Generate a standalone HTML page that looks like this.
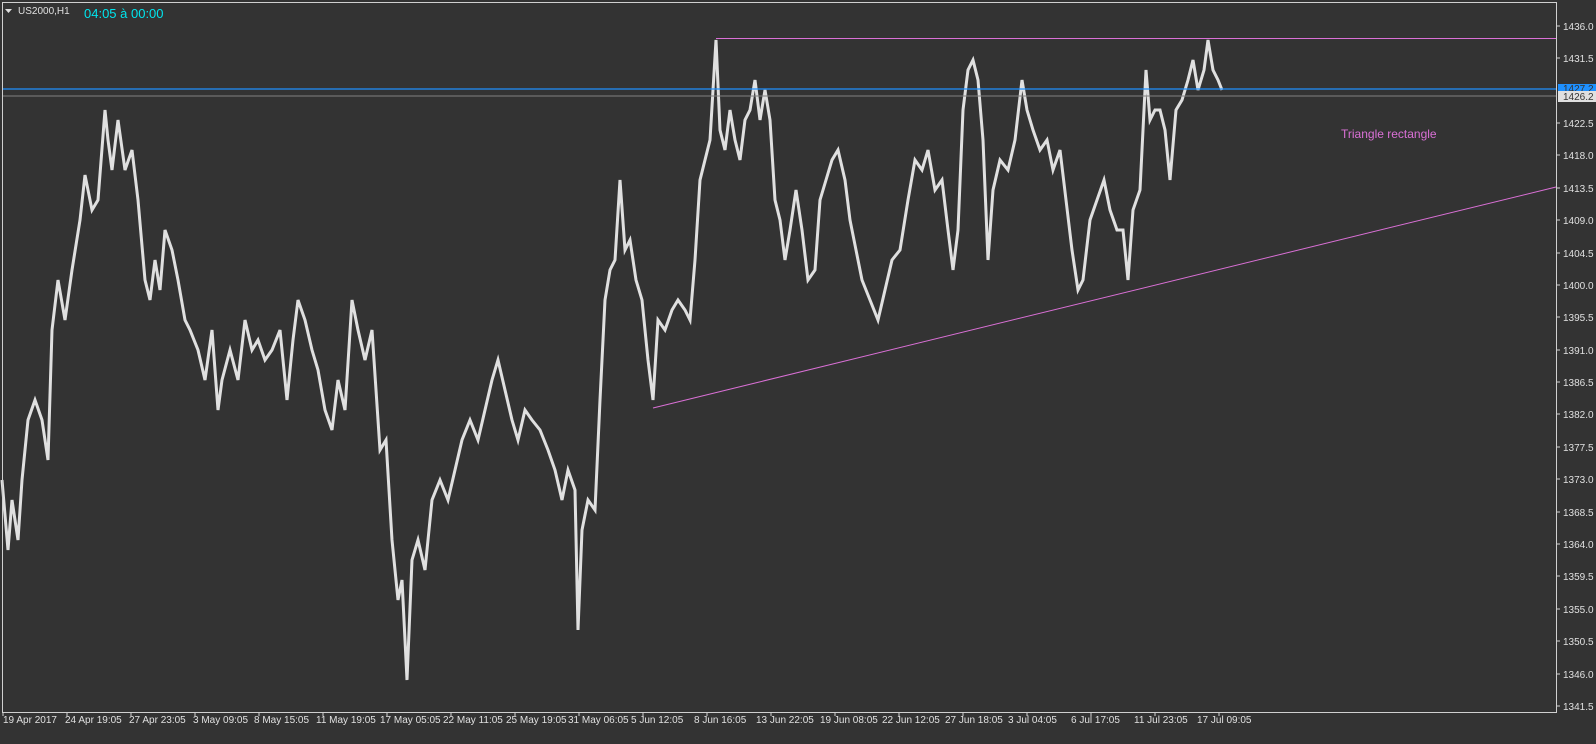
<!DOCTYPE html>
<html><head><meta charset="utf-8"><style>
html,body{margin:0;padding:0;background:#333;width:1596px;height:744px;overflow:hidden;font-family:"Liberation Sans",sans-serif}
svg{position:absolute;left:0;top:0}
</style></head><body>
<svg width="1596" height="744" xmlns="http://www.w3.org/2000/svg" font-family="Liberation Sans, sans-serif">
<rect width="1596" height="744" fill="#333"/>
<g stroke="#e0e0e0" fill="none" stroke-linejoin="miter">
<polyline stroke-width="3" points="2,480 8,550 12,500 18,540 22,480 28,420 35,400 42,420 48,460 52,330 58,280 65,320 72,270 80,220 85,175 92,210 98,200 105,110 108,140 112,170 118,120 125,170 132,150 138,200 145,280 150,300 155,260 160,290 165,230 172,250 178,280 185,320 190,330 198,350 205,380 212,330 218,410 222,380 230,350 238,380 245,320 252,350 258,340 265,360 272,350 280,330 287,400 293,340 298,300 305,320 312,350 318,370 325,410 332,430 338,380 345,410 352,300 358,330 365,360 372,330 380,450 386,440 392,540 398,600 402,580 407,680 412,560 418,540 425,570 432,500 440,480 448,500 455,470 462,440 470,420 478,440 485,410 492,380 498,360 505,390 512,420 518,440 525,410 532,420 540,430 548,450 555,470 562,500 568,470 575,490 578,630 582,530 588,500 595,510 600,400 605,300 610,270 615,260 620,180 625,250 630,240 636,280 642,300 648,360 653,400 658,320 665,330 672,310 678,300 685,310 690,320 695,260 700,180 705,160 710,140 716,40 720,130 725,150 730,110 735,140 740,160 745,120 750,110 755,80 760,120 765,90 770,120 775,200 780,220 785,260 790,230 796,190 802,230 808,280 815,270 820,200 826,180 832,160 838,150 845,180 850,220 856,250 862,280 870,300 878,320 885,290 892,260 900,250 908,200 915,160 922,170 928,150 935,190 942,180 948,230 953,270 958,230 963,110 968,70 973,60 978,80 983,140 988,260 993,190 1000,160 1008,170 1015,140 1022,80 1027,110 1033,130 1040,150 1047,140 1053,170 1060,150 1066,200 1072,250 1078,290 1083,280 1090,220 1097,200 1104,180 1110,210 1117,230 1123,230 1128,280 1133,210 1140,190 1146,70 1150,120 1155,110 1160,110 1165,130 1170,180 1176,110 1182,100 1188,80 1193,60 1198,90 1204,70 1208,40 1213,70 1218,80 1222,90"/>
</g>
<line x1="2" y1="89" x2="1556" y2="89" stroke="#1e90ff" stroke-width="1.3"/>
<line x1="2" y1="96" x2="1556" y2="96" stroke="#808080" stroke-width="1"/>
<line x1="716" y1="38.5" x2="1556" y2="38.5" stroke="#da70d6" stroke-width="1"/>
<line x1="653" y1="408" x2="1556" y2="187" stroke="#da70d6" stroke-width="1"/>
<text x="1341" y="138" fill="#da70d6" font-size="12">Triangle rectangle</text>
<rect x="2.5" y="2.5" width="1554" height="710" fill="none" stroke="#d0d0d0" stroke-width="1"/>
<polygon points="5,9 12,9 8.5,13" fill="#e0e0e0"/>
<text x="18" y="14" fill="#e0e0e0" font-size="10">US2000,H1</text>
<text x="84" y="18" fill="#00e5ee" font-size="13">04:05 à 00:00</text>
<g fill="#e0e0e0" font-size="10">
<g stroke="#d0d0d0">
<line x1="1556" x2="1560" y1="26" y2="26"/><line x1="1556" x2="1560" y1="58" y2="58"/><line x1="1556" x2="1560" y1="123" y2="123"/><line x1="1556" x2="1560" y1="155" y2="155"/><line x1="1556" x2="1560" y1="188" y2="188"/><line x1="1556" x2="1560" y1="220" y2="220"/><line x1="1556" x2="1560" y1="253" y2="253"/><line x1="1556" x2="1560" y1="285" y2="285"/><line x1="1556" x2="1560" y1="317" y2="317"/><line x1="1556" x2="1560" y1="350" y2="350"/><line x1="1556" x2="1560" y1="382" y2="382"/><line x1="1556" x2="1560" y1="414" y2="414"/><line x1="1556" x2="1560" y1="447" y2="447"/><line x1="1556" x2="1560" y1="479" y2="479"/><line x1="1556" x2="1560" y1="512" y2="512"/><line x1="1556" x2="1560" y1="544" y2="544"/><line x1="1556" x2="1560" y1="576" y2="576"/><line x1="1556" x2="1560" y1="609" y2="609"/><line x1="1556" x2="1560" y1="641" y2="641"/><line x1="1556" x2="1560" y1="674" y2="674"/><line x1="1556" x2="1560" y1="706" y2="706"/>
</g>
<text x="1563" y="30">1436.0</text><text x="1563" y="62">1431.5</text><text x="1563" y="127">1422.5</text><text x="1563" y="159">1418.0</text><text x="1563" y="192">1413.5</text><text x="1563" y="224">1409.0</text><text x="1563" y="257">1404.5</text><text x="1563" y="289">1400.0</text><text x="1563" y="321">1395.5</text><text x="1563" y="354">1391.0</text><text x="1563" y="386">1386.5</text><text x="1563" y="418">1382.0</text><text x="1563" y="451">1377.5</text><text x="1563" y="483">1373.0</text><text x="1563" y="516">1368.5</text><text x="1563" y="548">1364.0</text><text x="1563" y="580">1359.5</text><text x="1563" y="613">1355.0</text><text x="1563" y="645">1350.5</text><text x="1563" y="678">1346.0</text><text x="1563" y="710">1341.5</text>
</g>
<rect x="1558" y="84" width="38" height="8" fill="#1e90ff"/>
<text x="1563" y="92" fill="#333" font-size="10">1427.2</text>
<rect x="1558" y="91" width="38" height="11" fill="#e0e0e0"/>
<text x="1563" y="100" fill="#333" font-size="10">1426.2</text>
<g stroke="#d0d0d0">
<line x1="3" x2="3" y1="712" y2="716"/><line x1="67" x2="67" y1="712" y2="716"/><line x1="131" x2="131" y1="712" y2="716"/><line x1="195" x2="195" y1="712" y2="716"/><line x1="259" x2="259" y1="712" y2="716"/><line x1="323" x2="323" y1="712" y2="716"/><line x1="387" x2="387" y1="712" y2="716"/><line x1="451" x2="451" y1="712" y2="716"/><line x1="515" x2="515" y1="712" y2="716"/><line x1="579" x2="579" y1="712" y2="716"/><line x1="643" x2="643" y1="712" y2="716"/><line x1="707" x2="707" y1="712" y2="716"/><line x1="771" x2="771" y1="712" y2="716"/><line x1="835" x2="835" y1="712" y2="716"/><line x1="899" x2="899" y1="712" y2="716"/><line x1="963" x2="963" y1="712" y2="716"/><line x1="1027" x2="1027" y1="712" y2="716"/><line x1="1091" x2="1091" y1="712" y2="716"/><line x1="1155" x2="1155" y1="712" y2="716"/><line x1="1219" x2="1219" y1="712" y2="716"/>
</g>
<g fill="#e0e0e0" font-size="10">
<text x="3" y="723">19 Apr 2017</text><text x="65" y="723">24 Apr 19:05</text><text x="129" y="723">27 Apr 23:05</text><text x="193" y="723">3 May 09:05</text><text x="254" y="723">8 May 15:05</text><text x="316" y="723">11 May 19:05</text><text x="380" y="723">17 May 05:05</text><text x="443" y="723">22 May 11:05</text><text x="506" y="723">25 May 19:05</text><text x="568" y="723">31 May 06:05</text><text x="631" y="723">5 Jun 12:05</text><text x="694" y="723">8 Jun 16:05</text><text x="756" y="723">13 Jun 22:05</text><text x="820" y="723">19 Jun 08:05</text><text x="882" y="723">22 Jun 12:05</text><text x="945" y="723">27 Jun 18:05</text><text x="1008" y="723">3 Jul 04:05</text><text x="1071" y="723">6 Jul 17:05</text><text x="1134" y="723">11 Jul 23:05</text><text x="1197" y="723">17 Jul 09:05</text>
</g>
</svg>
</body></html>
